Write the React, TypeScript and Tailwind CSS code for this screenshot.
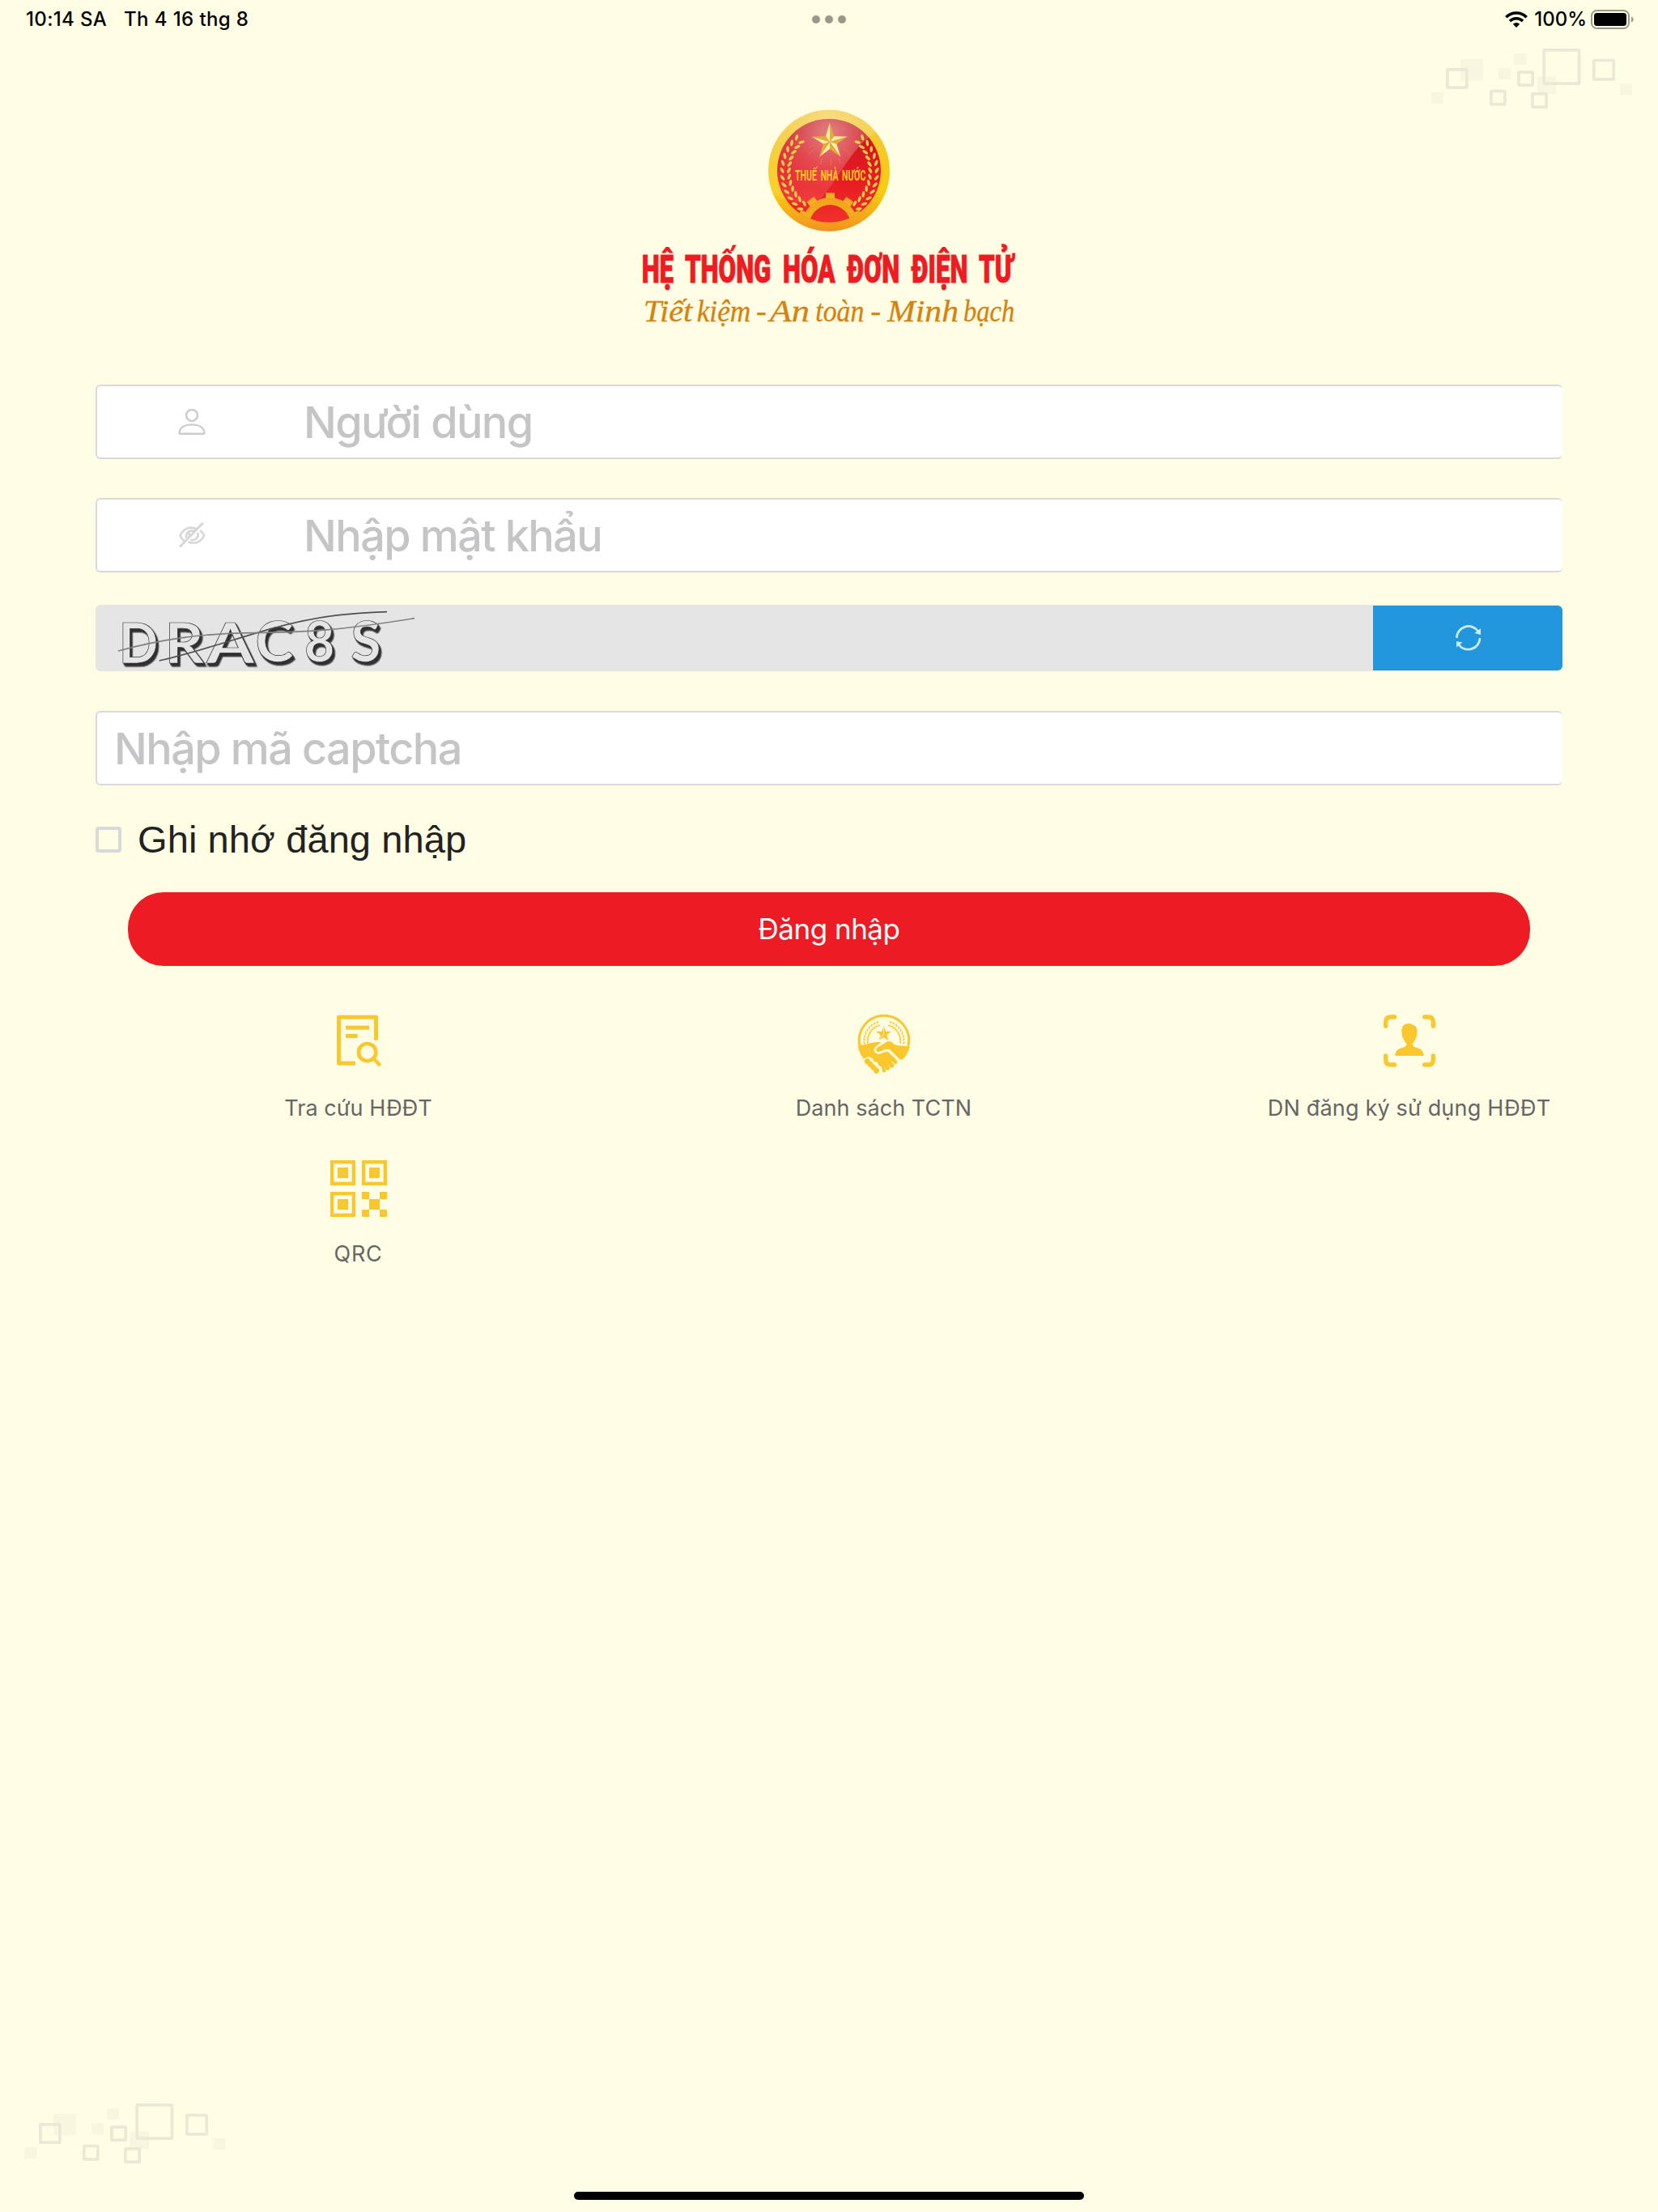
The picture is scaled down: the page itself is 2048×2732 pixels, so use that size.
import { useState } from "react";

const RED = "#ed1c24";
const YELLOW = "#fbc72f";

function StatusBar() {
  return (
    <div className="relative flex h-12 items-center justify-between pl-8 pr-[29px] font-['Inter'] text-2xl font-medium text-black">
      <div className="flex gap-[21px]">
        <span className="tracking-[0.35px]">10:14 SA</span>
        <span className="tracking-[0.4px]">Th 4 16 thg 8</span>
      </div>

      <div className="absolute left-[1003px] top-[19px] flex gap-[6px]">
        <i className="size-[10px] rounded-full bg-[#99988a]" />
        <i className="size-[10px] rounded-full bg-[#99988a]" />
        <i className="size-[10px] rounded-full bg-[#99988a]" />
      </div>

      <div className="flex items-center">
        <svg className="mr-[8px] h-5 w-7" viewBox="0 0 28 20" fill="none" stroke="#000" strokeWidth="3.6">
          <path d="M1.3 7.2a18 18 0 0 1 25.4 0" />
          <path d="M6 12a11.4 11.4 0 0 1 16 0" />
          <path d="M14 20l-4.2-4.2a6 6 0 0 1 8.400 0z" fill="#000" stroke="none" />
        </svg>
        <span>100%</span>
        <svg className="ml-[5px] h-6 w-[54px]" viewBox="0 0 54 24">
          <rect x="1" y="1" width="46" height="22" rx="6.500" fill="none" stroke="#9a998b" strokeWidth="2" />
          <rect x="4" y="4" width="40" height="16" rx="3.500" fill="#000" />
          <path d="M50 8.500c3.600 1 3.600 6 0 7z" fill="#9a998b" />
        </svg>
      </div>
    </div>
  );
}

function Squares() {
  const filled = [
    [192, 219, 84, 79],
    [390, 198, 45, 42],
    [333, 252, 45, 42],
    [84, 342, 45, 42],
    [476, 284, 70, 65],
    [784, 309, 44, 42],
  ];

  const outlined = [
    [138, 252, 83, 78],
    [300, 332, 62, 60],
    [402, 262, 63, 59],
    [496, 180, 141, 135],
    [453, 342, 63, 60],
    [681, 218, 84, 81],
  ];

  return (
    <svg className="h-[74px] w-[248px]" viewBox="84 180 744 222">
      {filled.map(([x, y, w, h]) => (
        <rect key={x} x={x} y={y} width={w} height={h} fill="#f9f6e0" />
      ))}
      {outlined.map(([x, y, w, h]) => (
        <rect
          key={x}
          x={x + 5.5}
          y={y + 5.5}
          width={w - 11}
          height={h - 11}
          rx="2"
          fill="none"
          stroke="#ebe8d5"
          strokeWidth="11"
        />
      ))}
    </svg>
  );
}

// one branch of the wreath, leaves come in pairs along an arc
function Laurel({ cx, cy, r, from, to, count, size }: any) {
  return (
    <g>
      {Array.from({ length: count }, (_, i) => {
        const deg = from + ((to - from) * i) / (count - 1);
        const a = (deg * Math.PI) / 180;
        const x = cx - r * Math.cos(a);
        const y = cy + r * Math.sin(a);
        return (
          <g key={i} transform={`translate(${x} ${y}) rotate(${-deg - 90})`}>
            <ellipse cx={size} cy={-size * 0.7} rx={size} ry={size * 0.45} transform="rotate(-28)" />
            <ellipse cx={size} cy={size * 0.7} rx={size} ry={size * 0.45} transform="rotate(28)" />
          </g>
        );
      })}
    </g>
  );
}

function Star() {
  const outer = [[315, 95], [381, 146], [355, 221], [276, 221], [249, 146]];
  const inner = [[331, 145], [340, 173], [315, 192], [291, 173], [300, 145]];

  return (
    <g>
      {outer.map((p, i) => (
        <g key={i}>
          <polygon points={`315,166 ${inner[(i + 4) % 5]} ${p}`} fill="#fdf0a0" />
          <polygon points={`315,166 ${p} ${inner[i]}`} fill="#e3ac35" />
        </g>
      ))}
    </g>
  );
}

function Emblem() {
  return (
    <svg className="h-[170px] w-[210px]" viewBox="-3 0 630 510">
      <defs>
        <linearGradient id="ring" x1="0" y1="0" x2="0" y2="1">
          <stop offset="0" stopColor="#f3c83c" />
          <stop offset="0.68" stopColor="#f8cb12" />
          <stop offset="1" stopColor="#f3921f" />
        </linearGradient>
        <linearGradient id="disc" x1="0" y1="0" x2="0" y2="1">
          <stop offset="0" stopColor="#c4161f" />
          <stop offset="0.55" stopColor="#e61a22" />
          <stop offset="1" stopColor="#f0302a" />
        </linearGradient>
        <radialGradient id="glow" gradientUnits="userSpaceOnUse" cx="312" cy="130" r="220">
          <stop offset="0" stopColor="#fff" stopOpacity="0.45" />
          <stop offset="0.6" stopColor="#fff" stopOpacity="0.2" />
          <stop offset="1" stopColor="#fff" stopOpacity="0.1" />
        </radialGradient>
        <linearGradient id="cog" x1="0" y1="0" x2="0" y2="1">
          <stop offset="0" stopColor="#f3a21f" />
          <stop offset="1" stopColor="#f8c01c" />
        </linearGradient>
        <clipPath id="discClip">
          <circle cx="312" cy="272" r="192" />
        </clipPath>
        <clipPath id="ringClip">
          <circle cx="312" cy="272" r="225" />
        </clipPath>
      </defs>

      <circle cx="312" cy="272" r="225" fill="url(#ring)" />
      <circle cx="312" cy="272" r="192" fill="url(#disc)" />

      <g clipPath="url(#ringClip)">
        <path d="M490 132C400 170 350 310 270 388C200 400 140 380 80 350V40H490Z" fill="url(#glow)" />
      </g>

      <g clipPath="url(#discClip)" fill="url(#cog)">
        {[-70, -37, 0, 37, 70].map((deg) => (
          <path key={deg} d="M300 354h33v26h-33z" transform={`rotate(${deg} 316 476)`} />
        ))}
        <path
          fillRule="evenodd"
          d="M212 476a104 104 0 0 1 208 0a104 104 0 0 1-208 0zM239 476a77 77 0 0 0 154 0a77 77 0 0 0-154 0z"
        />
      </g>

      <g stroke="#d9923a" strokeWidth="2">
        <path d="M262 108l22 20M368 110l-24 22M236 212l26-22M392 212l-24-20M319 222v32M288 226l-8 24M348 226l8 20M240 184l16-6" />
      </g>
      <Star />

      <g fill="#f6cf4a">
        <Laurel cx={314} cy={276} r={163} from={-44} to={54} count={12} size={11.500} />
        <g transform="matrix(-1 0 0 1 628 0)">
          <Laurel cx={314} cy={276} r={163} from={-44} to={54} count={12} size={11.500} />
        </g>
      </g>

      <text
        x="186"
        y="308"
        textLength="262"
        lengthAdjust="spacingAndGlyphs"
        className="font-['Roboto'] text-[55px] font-bold [word-spacing:10px]"
        fill="#fbcb2c"
      >
        THUẾ NHÀ NƯỚC
      </text>
    </svg>
  );
}

function Title() {
  return (
    <svg className="h-[130px] w-[510px] overflow-visible" viewBox="-3 0 1530 390">
      <text
        x="68"
        y="177"
        textLength="1376"
        lengthAdjust="spacingAndGlyphs"
        className="font-['Roboto'] text-[145px] font-black [word-spacing:32px]"
        fill={RED}
        stroke={RED}
        strokeWidth="3"
      >
        HỆ THỐNG HÓA ĐƠN ĐIỆN TỬ
      </text>
      <text
        y="320"
        className="font-['Liberation_Serif'] text-[116px] italic"
        fill="#d5820f"
        stroke="#d5820f"
        strokeWidth="1"
      >
        <tspan x="74" textLength="182" lengthAdjust="spacingAndGlyphs">Tiết</tspan>{" "}
        <tspan x="272" textLength="200" lengthAdjust="spacingAndGlyphs">kiệm</tspan>{" "}
        <tspan x="492">-</tspan>
        <tspan x="542" textLength="148" lengthAdjust="spacingAndGlyphs">An</tspan>{" "}
        <tspan x="712" textLength="180" lengthAdjust="spacingAndGlyphs">toàn</tspan>{" "}
        <tspan x="916">-</tspan>{" "}
        <tspan x="978" textLength="264" lengthAdjust="spacingAndGlyphs">Minh</tspan>{" "}
        <tspan x="1260" textLength="190" lengthAdjust="spacingAndGlyphs">bạch</tspan>
      </text>
    </svg>
  );
}

function UserIcon() {
  return (
    <svg className="h-8 w-[34px]" viewBox="0 0 34 32" fill="none" stroke="#cbcbcb" strokeWidth="2.400">
      <circle cx="17" cy="8" r="7" />
      <path d="M1.500 29.200C2.500 22.500 9 19.400 17 19.400s14.500 3.100 15.500 9.800c.1.900-.4 1.500-1.200 1.500H2.700c-.8 0-1.300-.6-1.200-1.500z" />
    </svg>
  );
}

function EyeOffIcon() {
  return (
    <svg className="h-8 w-[34px]" viewBox="0 0 34 32" fill="none" stroke="#d6d6d6" strokeWidth="2.600" strokeLinecap="round">
      <path d="M22.500 8.300C13 4.500 6 9 2.500 16.500c1.300 3 3 5.200 5.200 6.700" />
      <path d="M28 10.800c2 1.500 3.300 3.500 4.200 5.700C28.500 24 22 27 13.500 24.700" />
      <path d="M20 11.300c-5.500-2.500-10.500 1.500-10 7M24.500 14c.8 4.500-2.500 8.500-8 8" />
      <path d="M14 11.500c-1 2.500-.5 4.500 1.500 5" />
      <path d="M30 1.500L3 29.500" strokeWidth="3" />
    </svg>
  );
}

function RefreshIcon() {
  return (
    <svg className="h-8 w-[31px]" viewBox="0 0 31 32" fill="none" stroke="#cdedff" strokeWidth="2.800">
      <path d="M1.400 15.800A14.500 14.500 0 0 1 28 8" />
      <path d="M30 16A14.500 14.500 0 0 1 4 24.500" />
      <path d="M31 4v8l-7.500-2zM1 20v7.500L8.500 21.500z" fill="#cdedff" stroke="none" />
    </svg>
  );
}

function Captcha() {
  return (
    <svg className="h-[82px] w-[400px] overflow-visible font-['Lato']" viewBox="54 51 1200 246" fill="none">
      <text
        y="266"
        className="text-[206px] font-bold [filter:drop-shadow(4px_5px_0_#303030)_drop-shadow(5px_8px_0_#303030)]"
        fill="#e5e5e5"
        stroke="#333"
        strokeWidth="2"
      >
        <tspan x="140" textLength="146" lengthAdjust="spacingAndGlyphs">D</tspan>
        <tspan x="310" textLength="146" lengthAdjust="spacingAndGlyphs">R</tspan>
        <tspan x="466" textLength="176" lengthAdjust="spacingAndGlyphs">A</tspan>
        <tspan x="646" textLength="142" lengthAdjust="spacingAndGlyphs" y="262">C</tspan>
        <tspan x="828" textLength="112" lengthAdjust="spacingAndGlyphs" y="262">8</tspan>
        <tspan x="1000" textLength="112" lengthAdjust="spacingAndGlyphs" y="262">S</tspan>
      </text>
      <path d="M290 258C440 225 620 160 760 125S1000 82 1134 77" stroke="#505050" strokeWidth="5" />
      <path d="M138 222C290 180 440 157 640 155S960 145 1236 101" stroke="#808080" strokeWidth="5" />
    </svg>
  );
}

function LookupIcon() {
  return (
    <svg className="size-[70px]" viewBox="264 69 210 210" fill="none" stroke={YELLOW} strokeWidth="15">
      <path d="M433.500 164V78.500H295.500V249.500H357" strokeLinejoin="round" />
      <path d="M321 117.500h87M321 148.500h44" />
      <circle cx="401" cy="209" r="32" strokeWidth="14" />
      <path d="M425 233l24 25" strokeWidth="13" />
    </svg>
  );
}

function HandshakeIcon() {
  return (
    <svg className="h-[74px] w-[70px]" viewBox="290 69 210 222" fill={YELLOW}>
      <path d="M305 184A92 92 0 1 1 485 184" fill="none" stroke={YELLOW} strokeWidth="9" />
      <path d="M299 180C325 186 352 168 378 171C390 172 370 182 362 190C352 201 362 216 376 215C390 214 398 203 411 208C423 220 437 232 444 242C447 251 440 255 433 251L420 240L432 256C434 266 424 269 418 264L406 250L417 266C416 277 407 278 401 271L393 260L402 275C402 286 391 286 388 279C391 262 379 259 374 257C374 246 364 243 358 244C355 230 342 226 334 227L320 234C307 216 299 200 299 180Z" />
      <path d="M491 185C486 206 477 222 466 234C459 239 454 236 449 231L416 199C399 195 388 204 375 208C364 208 363 195 370 191L404 171C414 165 420 168 429 176C440 185 455 185 491 185Z" />
      <path d="M333 242L368 278" fill="none" stroke="#fffde3" strokeWidth="28" strokeLinecap="round" />
      <path d="M333 242L368 278" fill="none" stroke={YELLOW} strokeWidth="21" strokeLinecap="round" strokeDasharray="0.1 16" />
      <path d="M333 242L368 278" fill="none" stroke={YELLOW} strokeWidth="14" strokeLinecap="round" />
      <path d="M394 110l7 21 21 1-17 12 7 22-18-13-18 13 6-21-17-13h22z" />
      <path d="M394 111v31l-17 24" fill="none" stroke="#fffde3" strokeWidth="2" />
      <Laurel cx={395} cy={167} r={67} from={-68} to={8} count={9} size={6} />
      <g transform="matrix(-1 0 0 1 790 0)">
        <Laurel cx={395} cy={167} r={67} from={-68} to={8} count={9} size={6} />
      </g>
    </svg>
  );
}

function RegisterIcon() {
  return (
    <svg className="size-[70px]" viewBox="500 69 210 210" fill={YELLOW}>
      <path
        d="M517 112V97q0-19 19-19H550M661 78H674q19 0 19 19V112M517 222V236q0 19 19 19H550M661 255H674q19 0 19-19V222"
        fill="none"
        stroke={YELLOW}
        strokeWidth="16"
        strokeLinecap="round"
      />
      <path d="M552 222C552 202 566 196 578 192C588 189 595 186 594 176C588 170 583 163 581 154C577 152 577 146 578 141C571 118 583 102 602 102C609 102 614 105 616 107C631 109 636 122 632 141C634 146 633 152 629 154C627 163 622 170 617 176C615 186 622 189 632 192C645 196 658 203 658 222Z" />
    </svg>
  );
}

function QrIcon() {
  return (
    <svg className="size-[70px]" viewBox="264 609 210 210" fill={YELLOW}>
      {[[264, 609], [381, 609], [264, 726]].map(([x, y], i) => (
        <g key={i}>
          <rect x={x + 6.5} y={y + 6.5} width="80" height="80" fill="none" stroke={YELLOW} strokeWidth="13" />
          <rect x={x + 27} y={y + 27} width="39" height="39" />
        </g>
      ))}
      <path d="M381 726h27v27h39v-27h27v27h-27v39h27v27h-27v-27h-39v27h-27v-27h27v-39h-27z" />
    </svg>
  );
}

const links = [
  { label: "Tra cứu HĐĐT", icon: <LookupIcon />, className: "tracking-[0.05px]" },
  { label: "Danh sách TCTN", icon: <HandshakeIcon />, className: "tracking-[0.05px]" },
  { label: "DN đăng ký sử dụng HĐĐT", icon: <RegisterIcon />, className: "tracking-[0.18px]" },
  { label: "QRC", icon: <QrIcon />, className: "tracking-[0.7px]" },
];

const field =
  "flex h-[92px] items-center rounded-[6px] border-y-2 border-l-2 border-[#d9d9dc] bg-white";

const input =
  "h-full flex-1 bg-transparent font-['Inter'] text-[54px] font-medium tracking-[-1.6px] text-[#222] outline-none placeholder:text-[#c5c5c7]";

export default function App() {
  const [form, setForm] = useState({
    username: "",
    password: "",
    captcha: "",
    remember: false,
  });

  return (
    <div className="relative flex h-[2732px] w-[2048px] flex-col overflow-hidden bg-[#fffde3]">
      <div className="absolute left-[1768px] top-[60px]">
        <Squares />
      </div>
      <div className="absolute left-[30px] top-[2598px]">
        <Squares />
      </div>

      <StatusBar />

      <header className="flex flex-col items-center pt-[72px]">
        <Emblem />
        <Title />
      </header>

      <form className="mx-[118px] mt-[55px] flex flex-col">
        <div className={field}>
          <div className="flex w-[255px] justify-start pl-[100px]">
            <UserIcon />
          </div>
          <input
            className={input}
            placeholder="Người dùng"
            value={form.username}
            onChange={(e) => setForm({ ...form, username: e.target.value })}
          />
        </div>

        <div className={`${field} mt-12`}>
          <div className="flex w-[255px] justify-start pl-[100px]">
            <EyeOffIcon />
          </div>
          <input
            type="password"
            className={input}
            placeholder="Nhập mật khẩu"
            value={form.password}
            onChange={(e) => setForm({ ...form, password: e.target.value })}
          />
        </div>

        <div className="mt-10 flex h-[82px] items-center justify-between rounded-[6px] bg-[#e5e5e5]">
          <Captcha />
          <button
            type="button"
            className="flex h-20 w-[234px] items-center justify-center rounded-r-[6px] bg-[#2196dc]"
          >
            <RefreshIcon />
          </button>
        </div>

        <div className={`${field} mt-[49px] pl-[21px]`}>
          <input
            className={input}
            placeholder="Nhập mã captcha"
            value={form.captcha}
            onChange={(e) => setForm({ ...form, captcha: e.target.value })}
          />
        </div>

        <label className="mt-[51px] flex h-8 items-center gap-5">
          <input
            type="checkbox"
            className="size-8 appearance-none rounded-[4px] border-4 border-[#d9d9dc]"
            checked={form.remember}
            onChange={(e) => setForm({ ...form, remember: e.target.checked })}
          />
          <span className="font-['Liberation_Sans'] text-[47px] tracking-[0.1px] text-[#222]">
            Ghi nhớ đăng nhập
          </span>
        </label>

        <button
          type="button"
          className="mx-10 mt-[49px] h-[91px] rounded-[44px] bg-[#ed1c24] font-['Inter'] text-[35px] tracking-[-0.5px] text-white"
        >
          Đăng nhập
        </button>
      </form>

      <div className="ml-[118px] mt-[60px] grid w-[1947px] shrink-0 grid-cols-3">
        {links.map((l) => (
          <div key={l.label} className="flex h-[180px] flex-col items-center">
            <div className="h-[98px]">{l.icon}</div>
            <span className={`font-['Inter'] text-[27px] leading-[36px] text-[#666] ${l.className}`}>
              {l.label}
            </span>
          </div>
        ))}
      </div>

      <div className="mx-auto mb-[15px] mt-auto h-[10px] w-[630px] rounded-full bg-black" />
    </div>
  );
}
